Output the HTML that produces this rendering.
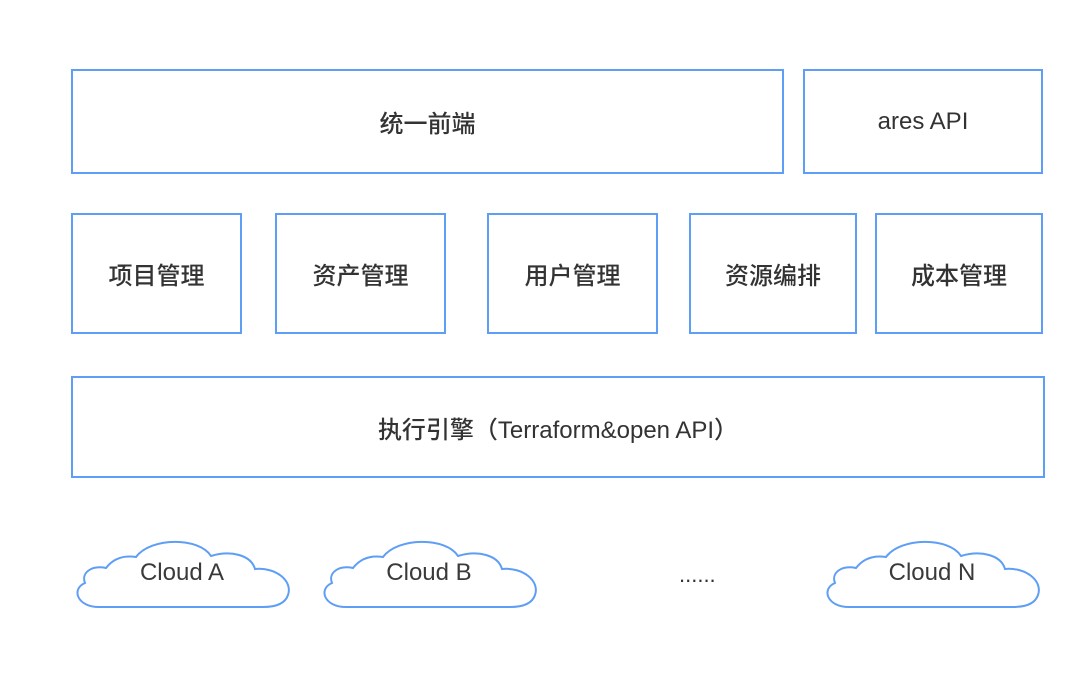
<!DOCTYPE html>
<html><head><meta charset="utf-8"><style>
body{margin:0;width:1080px;height:678px;background:#fff;position:relative;overflow:hidden;font-family:"Liberation Sans","Noto Sans CJK SC",sans-serif;color:#333}
.b{position:absolute;box-sizing:border-box;border:2px solid #5e9ef5;display:flex;align-items:center;justify-content:center;font-size:24px;font-weight:500}
.c{position:absolute;width:222px;height:72px}
.c span{position:absolute;left:0;right:0;top:22px;text-align:center;font-size:24px;color:#3a3a3a}
svg{position:absolute;left:0;top:0}
</style></head><body>
<div class="b" style="left:71px;top:69px;width:713px;height:105px">统一前端</div>
<div class="b" style="left:803px;top:69px;width:240px;height:105px">ares API</div>
<div class="b" style="left:71px;top:213px;width:171px;height:121px">项目管理</div>
<div class="b" style="left:275px;top:213px;width:171px;height:121px">资产管理</div>
<div class="b" style="left:487px;top:213px;width:171px;height:121px">用户管理</div>
<div class="b" style="left:689px;top:213px;width:168px;height:121px">资源编排</div>
<div class="b" style="left:875px;top:213px;width:168px;height:121px">成本管理</div>
<div class="b" style="left:71px;top:376px;width:974px;height:102px">执行引擎（Terraform&amp;open API）</div>
<div class="c" style="left:71px;top:537px"><svg width="222" height="72" viewBox="0 0 222 72"><path d="M28,70 C6,70 0,52 14,46 C10,36 20,28 35,31 C42,22 52,18 65,20 C80,0 128,0 140,19 C160,13 180,18 184,32 C205,30 222,44 217,58 C214,67 204,70 192,70 Z" fill="#fff" stroke="#5e9ef5" stroke-width="2"/></svg><span>Cloud A</span></div>
<div class="c" style="left:318px;top:537px"><svg width="222" height="72" viewBox="0 0 222 72"><path d="M28,70 C6,70 0,52 14,46 C10,36 20,28 35,31 C42,22 52,18 65,20 C80,0 128,0 140,19 C160,13 180,18 184,32 C205,30 222,44 217,58 C214,67 204,70 192,70 Z" fill="#fff" stroke="#5e9ef5" stroke-width="2"/></svg><span>Cloud B</span></div>
<div class="c" style="left:821px;top:537px"><svg width="222" height="72" viewBox="0 0 222 72"><path d="M28,70 C6,70 0,52 14,46 C10,36 20,28 35,31 C42,22 52,18 65,20 C80,0 128,0 140,19 C160,13 180,18 184,32 C205,30 222,44 217,58 C214,67 204,70 192,70 Z" fill="#fff" stroke="#5e9ef5" stroke-width="2"/></svg><span>Cloud N</span></div>
<div style="position:absolute;left:679px;top:562px;font-size:22px;color:#333">......</div>
</body></html>
